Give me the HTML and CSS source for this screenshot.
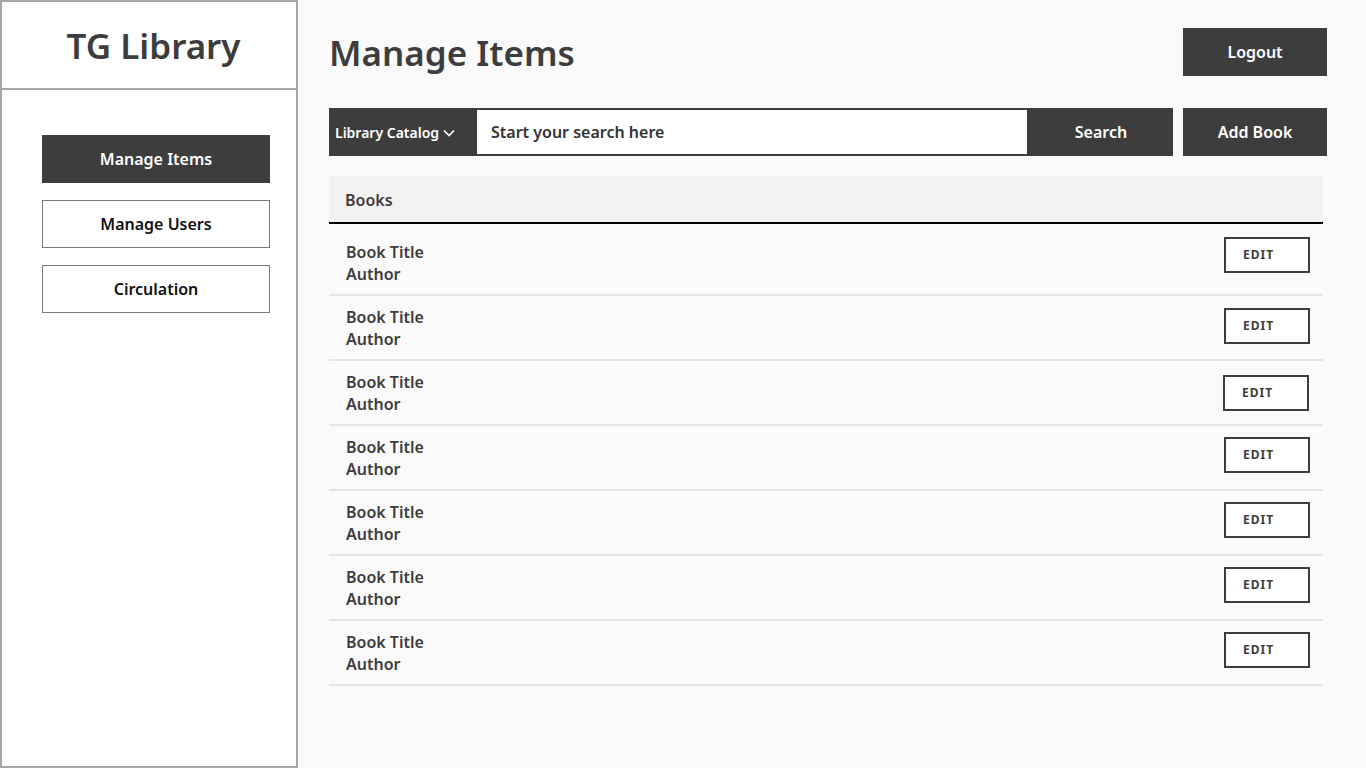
FILE: index.html
```html
<!DOCTYPE html>
<html lang="en">
<head>
<meta charset="utf-8">
<title>TG Library - Manage Items</title>
<link rel="stylesheet" href="styles.css">
</head>
<body>
<aside class="sidebar">
  <div class="brand">TG Library</div>
  <nav class="nav">
    <a class="nav-btn active">Manage Items</a>
    <a class="nav-btn">Manage Users</a>
    <a class="nav-btn">Circulation</a>
  </nav>
</aside>
<main class="main">
  <div class="topbar">
    <h1 class="title">Manage Items</h1>
    <button class="dark-btn">Logout</button>
  </div>
  <div class="search-row">
    <div class="search">
      <div class="catalog">Library Catalog
        <svg class="chev" width="12" height="8" viewBox="0 0 12 8"><path d="M1 1.5 L6 6.5 L11 1.5" fill="none" stroke="#fff" stroke-width="1.6"/></svg>
      </div>
      <div class="search-input">Start your search here</div>
      <div class="search-btn">Search</div>
    </div>
    <button class="dark-btn">Add Book</button>
  </div>
  <section class="table">
    <div class="table-head">Books</div>
    <div class="rows">
      <div class="row"><div class="info"><div>Book Title</div><div>Author</div></div><button class="edit">EDIT</button></div>
      <div class="row"><div class="info"><div>Book Title</div><div>Author</div></div><button class="edit">EDIT</button></div>
      <div class="row"><div class="info"><div>Book Title</div><div>Author</div></div><button class="edit">EDIT</button></div>
      <div class="row"><div class="info"><div>Book Title</div><div>Author</div></div><button class="edit">EDIT</button></div>
      <div class="row"><div class="info"><div>Book Title</div><div>Author</div></div><button class="edit">EDIT</button></div>
      <div class="row"><div class="info"><div>Book Title</div><div>Author</div></div><button class="edit">EDIT</button></div>
      <div class="row"><div class="info"><div>Book Title</div><div>Author</div></div><button class="edit">EDIT</button></div>
    </div>
  </section>
</main>
</body>
</html>
```
FILE: styles.css
```css
* { box-sizing: border-box; }
html, body { margin: 0; padding: 0; }
body {
  display: flex;
  width: 1366px;
  height: 768px;
  overflow: hidden;
  background: #fafafa;
  font-family: "Noto Sans", "Open Sans", sans-serif;
  color: #3d3d3d;
}
.sidebar {
  width: 298px;
  height: 768px;
  flex: none;
  background: #fff;
  border: 2px solid #a6a6a6;
  display: flex;
  flex-direction: column;
}
.brand {
  height: 88px;
  border-bottom: 2px solid #a6a6a6;
  display: flex;
  align-items: center;
  justify-content: center;
  font-size: 35px;
  font-weight: 600;
  color: #3d3d3d;
  padding-left: 9px;
}
.nav {
  padding: 45px 0 0 40px;
  display: flex;
  flex-direction: column;
  gap: 17px;
}
.nav-btn {
  width: 228px;
  height: 48px;
  display: flex;
  align-items: center;
  justify-content: center;
  border: 1px solid #7a7a7a;
  font-size: 16px;
  font-weight: 600;
  color: #111;
  background: #fff;
}
.nav-btn.active {
  background: #3d3d3d;
  border-color: #3d3d3d;
  color: #fff;
}
.main {
  flex: 1;
  padding: 28px 39px 0 31px;
}
.topbar {
  display: flex;
  align-items: center;
  justify-content: space-between;
  height: 48px;
}
.title {
  margin: 0;
  font-size: 35px;
  font-weight: 600;
  color: #3d3d3d;
}
.dark-btn {
  width: 144px;
  height: 48px;
  border: none;
  background: #3d3d3d;
  color: #fff;
  font-family: inherit;
  font-size: 16px;
  font-weight: 600;
  padding: 0;
}
.search-row {
  display: flex;
  gap: 10px;
  margin-top: 32px;
}
.search {
  flex: 1;
  height: 48px;
  display: flex;
  background: #3d3d3d;
  padding: 2px 0;
}
.catalog {
  width: 148px;
  display: flex;
  align-items: center;
  padding-left: 6px;
  gap: 4px;
  color: #fff;
  font-size: 14px;
  font-weight: 600;
}
.chev { margin-top: 1px; }
.search-input {
  width: 550px;
  background: #fff;
  display: flex;
  align-items: center;
  padding-left: 14px;
  font-size: 16px;
  font-weight: 600;
  color: #333;
}
.search-btn {
  flex: 1;
  display: flex;
  align-items: center;
  justify-content: center;
  padding-left: 2px;
  color: #fff;
  font-size: 16px;
  font-weight: 600;
}
.table {
  margin-top: 20px;
  margin-right: 4px;
}
.table-head {
  height: 48px;
  background: #f2f2f2;
  border-bottom: 2px solid #000;
  display: flex;
  align-items: center;
  padding: 2px 0 0 16px;
  font-size: 16px;
  font-weight: 600;
  color: #3d3d3d;
}
.rows { padding-top: 7px; }
.row {
  height: 65px;
  border-bottom: 2px solid #e3e3e3;
  display: flex;
  align-items: center;
  justify-content: space-between;
  padding: 0 13px 0 17px;
}
.info {
  font-size: 16px;
  font-weight: 600;
  line-height: 22px;
  color: #3d3d3d;
}
.edit {
  width: 86px;
  height: 36px;
  border: 2px solid #3d3d3d;
  background: #fff;
  color: #3d3d3d;
  font-family: inherit;
  font-size: 12px;
  font-weight: 700;
  letter-spacing: 1px;
  text-align: left;
  padding: 0 0 0 17px;
  margin-top: -6px;
}
.row:first-child .edit { margin-top: -16px; }
.row:nth-child(2) .edit { margin-top: -4px; }
.row:nth-child(3) .edit { margin-top: 0; margin-right: 1px; }
```
